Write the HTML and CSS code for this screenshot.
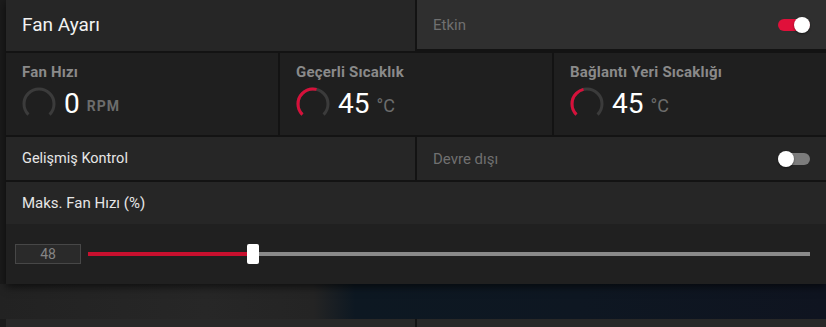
FILE: index.html
```html
<!DOCTYPE html>
<html lang="tr">
<head>
    <meta charset="UTF-8">
    <meta name="viewport" content="width=device-width, initial-scale=1.0">
    <title>Fan Ayarı</title>
    <link rel="stylesheet" href="styles.css">
</head>
<body>
    <div class="settings">
        <div class="row head">
            <div class="cell title">Fan Ayarı</div>
            <div class="cell option hovered">
                <span class="option-label">Etkin</span>
                <span class="toggle on"><span class="knob"></span></span>
            </div>
        </div>

        <div class="row stats">
            <div class="stat">
                <div class="stat-label">Fan Hızı</div>
                <div class="stat-value">
                    <svg class="gauge" viewBox="0 0 34 34" width="34" height="34">
                        <path class="gauge-track" d="M6.4 27.6 A15 15 0 1 1 27.6 27.6" pathLength="100"/>
                    </svg>
                    <span class="number">0</span>
                    <span class="unit rpm">RPM</span>
                </div>
            </div>
            <div class="stat">
                <div class="stat-label">Geçerli Sıcaklık</div>
                <div class="stat-value">
                    <svg class="gauge" viewBox="0 0 34 34" width="34" height="34">
                        <path class="gauge-track" d="M6.4 27.6 A15 15 0 1 1 27.6 27.6" pathLength="100"/>
                        <path class="gauge-fill" d="M6.4 27.6 A15 15 0 1 1 27.6 27.6" pathLength="100" stroke-dasharray="55 100"/>
                    </svg>
                    <span class="number">45</span>
                    <span class="unit">°C</span>
                </div>
            </div>
            <div class="stat">
                <div class="stat-label">Bağlantı Yeri Sıcaklığı</div>
                <div class="stat-value">
                    <svg class="gauge" viewBox="0 0 34 34" width="34" height="34">
                        <path class="gauge-track" d="M6.4 27.6 A15 15 0 1 1 27.6 27.6" pathLength="100"/>
                        <path class="gauge-fill" d="M6.4 27.6 A15 15 0 1 1 27.6 27.6" pathLength="100" stroke-dasharray="45 100"/>
                    </svg>
                    <span class="number">45</span>
                    <span class="unit">°C</span>
                </div>
            </div>
        </div>

        <div class="row">
            <div class="cell">Gelişmiş Kontrol</div>
            <div class="cell option">
                <span class="option-label">Devre dışı</span>
                <span class="toggle"><span class="knob"></span></span>
            </div>
        </div>

        <div class="row single">
            <div class="cell">Maks. Fan Hızı (%)</div>
        </div>

        <div class="slider-row">
            <div class="value-box">48</div>
            <div class="slider">
                <div class="slider-fill" style="width: 22.9%"></div>
                <div class="slider-thumb" style="left: 22.9%"></div>
            </div>
        </div>
    </div>

    <div class="backdrop"></div>

    <div class="row next">
        <div class="cell"></div>
        <div class="cell"></div>
    </div>
</body>
</html>
```

FILE: styles.css
```css
body {
    margin: 0;
    height: 327px;
    background-color: #1b1b1b;
    font-family: Roboto, "Noto Sans", sans-serif;
    color: #e6e6e6;
    overflow: hidden;
}
.settings {
    margin-left: 6px;
    width: 820px;
    display: flex;
    flex-direction: column;
    gap: 2px;
    background: #131313;
    box-shadow: 0 3px 8px rgba(0, 0, 0, 0.6);
    position: relative;
    z-index: 1;
}
.row {
    display: grid;
    grid-template-columns: 1fr 1fr;
    gap: 2px;
    background: #131313;
}
.row.single {
    grid-template-columns: 1fr;
}
.cell {
    background: #262626;
    height: 43px;
    display: flex;
    align-items: center;
    padding: 0 16px;
    font-size: 14.5px;
}
.head .cell {
    height: 49px;
}
.title {
    font-size: 19px;
    color: #f2f2f2;
    padding-bottom: 2px;
}
.single .cell {
    height: 42px;
    font-size: 15px;
}
.option {
    justify-content: space-between;
}
.option.hovered {
    background: #2f2f2f;
}
.option-label {
    color: #707070;
    font-size: 15px;
}
.toggle {
    width: 32px;
    height: 12px;
    border-radius: 6px;
    background: #7c7c7c;
    display: flex;
    align-items: center;
    justify-content: flex-start;
}
.toggle.on {
    background: #e0103a;
    justify-content: flex-end;
}
.knob {
    width: 16px;
    height: 16px;
    border-radius: 50%;
    background: #fff;
    box-shadow: 0 1px 2px rgba(0, 0, 0, 0.5);
}
.stats {
    grid-template-columns: 1fr 1fr 1fr;
}
.stat {
    background: #1f1f1f;
    height: 82px;
    padding: 10px 16px 0 16px;
    box-sizing: border-box;
}
.stat-label {
    font-size: 15px;
    font-weight: 700;
    color: #8a8a8a;
    line-height: 18px;
    letter-spacing: 0.2px;
}
.stat-value {
    display: flex;
    align-items: center;
    margin-top: 6px;
    height: 34px;
}
.gauge {
    fill: none;
    stroke-width: 3;
}
.gauge-track {
    stroke: #3b3b3b;
}
.gauge-fill {
    stroke: #d7103a;
}
.number {
    font-size: 28px;
    color: #fff;
    margin-left: 8px;
    line-height: 34px;
}
.unit {
    font-size: 18px;
    color: #6c6c6c;
    margin-left: 7px;
    margin-top: 3px;
}
.unit.rpm {
    font-weight: 700;
    font-size: 14px;
    letter-spacing: 1px;
    margin-left: 7px;
}
.slider-row {
    background: #202020;
    height: 60px;
    margin-top: -2px;
    display: flex;
    align-items: center;
    padding: 0 16px 0 9px;
}
.value-box {
    width: 66px;
    height: 20px;
    box-sizing: border-box;
    border: 1px solid #474747;
    background: #2a2a2a;
    color: #858585;
    font-size: 14px;
    display: flex;
    align-items: center;
    justify-content: center;
}
.slider {
    flex: 1;
    margin-left: 7px;
    height: 4px;
    background: #8a8a8a;
    position: relative;
}
.slider-fill {
    height: 100%;
    background: #c8102e;
}
.slider-thumb {
    position: absolute;
    top: -8px;
    width: 12px;
    height: 20px;
    margin-left: -6px;
    border-radius: 2px;
    background: #fff;
}
.backdrop {
    height: 35px;
    background: linear-gradient(to right, #222 0, #272727 25%, #242424 38%, #0d1822 43%, #0e1722 70%, #0f1420 100%);
}
.next {
    margin-left: 6px;
    width: 820px;
}
.next .cell {
    height: 10px;
    background: #282828;
}
```
